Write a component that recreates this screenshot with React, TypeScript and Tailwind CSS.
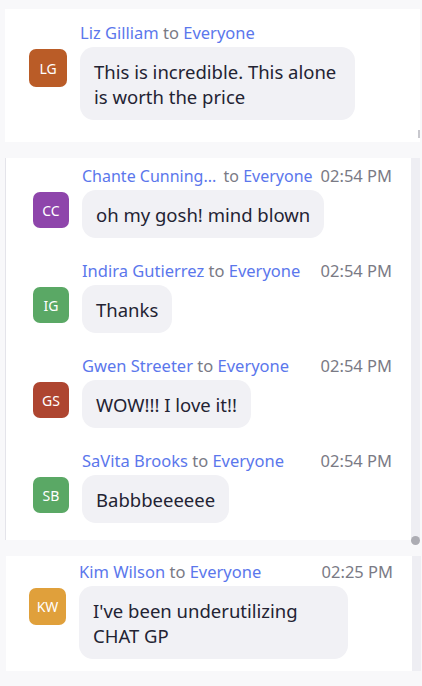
import React from "react";

type Msg = {
  name: string;
  initials: string;
  color: string;
  text: string[];
  time?: string;
  nameGap?: boolean;
  bubbleW?: number;
};

const font = { fontFamily: '"Noto Sans", "Open Sans", sans-serif' };

function Message({ m, avatar }: { m: Msg; avatar: number }) {
  return (
    <div className="flex">
      <div className="flex flex-col pt-[26px]">
        <div
          className="flex items-center justify-center rounded-[7px] text-white text-[14px]"
          style={{ width: avatar, height: avatar, backgroundColor: m.color }}
        >
          {m.initials}
        </div>
      </div>
      <div className="ml-[13px] flex flex-1 flex-col">
        <div className="flex h-[20px] items-center justify-between leading-[20px]">
          <div className={m.nameGap ? "whitespace-nowrap text-[16px]" : "whitespace-nowrap text-[16.5px]"}>
            <span className="text-[#5b77ec]">{m.name}</span>{" "}
            {m.nameGap && <span className="inline-block w-[3px]" />}
            <span className="text-[#7a7a85]">to</span>{" "}
            <span className="text-[#5b77ec]">Everyone</span>
          </div>
          {m.time && <div className="whitespace-nowrap text-[16.5px] text-[#7a7a85]">{m.time}</div>}
        </div>
        <div className="mt-[4px] flex">
          <div
            className="rounded-[14px] bg-[#f1f1f5] px-[14px] py-[11.5px] text-[18.5px] leading-[25px] text-[#232333]"
            style={m.bubbleW ? { width: m.bubbleW } : undefined}
          >
            {m.text.map((t, i) => (
              <div key={i}>{t}</div>
            ))}
          </div>
        </div>
      </div>
    </div>
  );
}

export default function App() {
  const p1: Msg = {
    name: "Liz Gilliam",
    initials: "LG",
    color: "#ba5c27",
    text: ["This is incredible. This alone", "is worth the price"],
    bubbleW: 275,
  };
  const p2: Msg[] = [
    { name: "Chante Cunning...", initials: "CC", color: "#8e45ab", text: ["oh my gosh! mind blown"], time: "02:54 PM", nameGap: true },
    { name: "Indira Gutierrez", initials: "IG", color: "#5aa865", text: ["Thanks"], time: "02:54 PM" },
    { name: "Gwen Streeter", initials: "GS", color: "#ae4530", text: ["WOW!!! I love it!!"], time: "02:54 PM" },
    { name: "SaVita Brooks", initials: "SB", color: "#5aa865", text: ["Babbbeeeeee"], time: "02:54 PM" },
  ];
  const p3: Msg = {
    name: "Kim Wilson",
    initials: "KW",
    color: "#e0a03b",
    text: ["I've been underutilizing", "CHAT GP"],
    time: "02:25 PM",
    bubbleW: 269,
  };

  return (
    <div className="h-[686px] w-[422px] overflow-hidden bg-[#f8f8fa] pt-[9px]" style={font}>
      {/* Panel 1 */}
      <div className="ml-[5px] flex h-[133px] w-[415px] bg-white">
        <div className="flex-1 pl-[24px] pr-[20px] pt-[14px]">
          <Message m={p1} avatar={38} />
        </div>
        <div className="flex w-[2px] flex-col justify-end pb-[4px]">
          <div className="h-[8px] w-[2px] bg-[#c8c8ce]" />
        </div>
      </div>

      {/* Panel 2 */}
      <div className="ml-[5px] mt-[16px] flex h-[382px] w-[415px] border-l border-[#e4e4ea] bg-white">
        <div className="flex flex-1 flex-col gap-[23px] pl-[27px] pr-[19px] pt-[8px]">
          {p2.map((m, i) => (
            <Message key={i} m={m} avatar={36} />
          ))}
        </div>
        <div className="relative w-[9px] bg-[#eeeef3]">
          <div className="absolute bottom-[-5px] left-0 h-[9px] w-[9px] rounded-full bg-[#acacb3]" />
        </div>
      </div>

      {/* Panel 3 */}
      <div className="ml-[6px] mt-[16px] flex h-[115px] w-[415px] bg-white">
        <div className="flex-1 pl-[23px] pr-[19px] pt-[6px]">
          <Message m={p3} avatar={37} />
        </div>
        <div className="w-[9px] bg-[#eeeef3]" />
      </div>
    </div>
  );
}
